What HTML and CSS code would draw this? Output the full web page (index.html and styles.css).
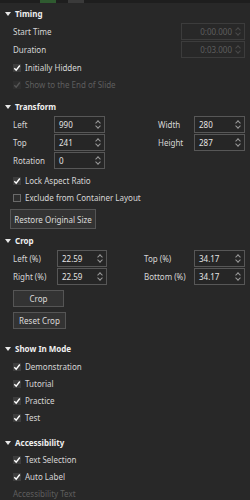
FILE: index.html
```
<!DOCTYPE html>
<html lang="en">
<head>
    <meta charset="UTF-8">
    <title>Properties</title>
    <link rel="stylesheet" href="styles.css">
</head>
<body>

<div class="tabstrip">
    <span class="tab tab-active"></span>
    <span class="tab"></span>
</div>

<div class="section sec-timing">
    <div class="head"><span class="tri"></span>Timing</div>
    <div class="trow">
        <span>Start Time</span>
        <div class="spin off"><span class="val">0:00.000</span><span class="arr"></span></div>
    </div>
    <div class="trow">
        <span>Duration</span>
        <div class="spin off"><span class="val">0:03.000</span><span class="arr"></span></div>
    </div>
    <div class="check on first">Initially Hidden</div>
    <div class="check on off">Show to the End of Slide</div>
</div>

<div class="section sec-transform">
    <div class="head"><span class="tri"></span>Transform</div>
    <div class="grid g-transform">
        <span>Left</span>
        <div class="spin"><span class="val">990</span><span class="arr"></span></div>
        <span></span>
        <span>Width</span>
        <div class="spin"><span class="val">280</span><span class="arr"></span></div>
        <span>Top</span>
        <div class="spin"><span class="val">241</span><span class="arr"></span></div>
        <span></span>
        <span>Height</span>
        <div class="spin"><span class="val">287</span><span class="arr"></span></div>
        <span>Rotation</span>
        <div class="spin"><span class="val">0</span><span class="arr"></span></div>
    </div>
    <div class="check on gap3">Lock Aspect Ratio</div>
    <div class="check">Exclude from Container Layout</div>
    <button class="btn btn-restore">Restore Original Size</button>
</div>

<div class="section sec-crop">
    <div class="head"><span class="tri"></span>Crop</div>
    <div class="grid g-crop">
        <span>Left (%)</span>
        <div class="spin"><span class="val">22.59</span><span class="arr"></span></div>
        <span></span>
        <span>Top (%)</span>
        <div class="spin"><span class="val">34.17</span><span class="arr"></span></div>
        <span>Right (%)</span>
        <div class="spin"><span class="val">22.59</span><span class="arr"></span></div>
        <span></span>
        <span>Bottom (%)</span>
        <div class="spin"><span class="val">34.17</span><span class="arr"></span></div>
    </div>
    <button class="btn btn-crop">Crop</button>
    <button class="btn btn-reset">Reset Crop</button>
</div>

<div class="section sec-mode">
    <div class="head"><span class="tri"></span>Show In Mode</div>
    <div class="check on first">Demonstration</div>
    <div class="check on">Tutorial</div>
    <div class="check on">Practice</div>
    <div class="check on">Test</div>
</div>

<div class="section sec-access">
    <div class="head"><span class="tri"></span>Accessibility</div>
    <div class="check on">Text Selection</div>
    <div class="check on">Auto Label</div>
    <div class="plain off">Accessibility Text</div>
</div>

</body>
</html>
```

FILE: styles.css
```
body {
    margin: 0;
    width: 250px;
    height: 500px;
    overflow: hidden;
    background: #282828;
    color: #d6d6d6;
    font-family: "Noto Sans", sans-serif;
    font-size: 8px;
}
.tabstrip {
    height: 3px;
    background: #1e1e1e;
    display: flex;
    padding-left: 40px;
    gap: 12px;
    margin-bottom: 2px;
}
.tab {
    width: 16px;
    background: #3a3a3a;
}
.tab-active {
    background: #2f5a30;
}
.head {
    height: 17px;
    display: flex;
    align-items: center;
    font-weight: bold;
    color: #f0f0f0;
    padding-left: 5px;
}
.tri {
    width: 0;
    height: 0;
    border-left: 3px solid transparent;
    border-right: 3px solid transparent;
    border-top: 4px solid #e8e8e8;
    margin-right: 4px;
}
.trow {
    height: 18px;
    display: flex;
    align-items: center;
    justify-content: space-between;
    padding: 0 5px 0 13px;
}
.trow .spin {
    width: 64px;
}
.trow .val {
    flex: 1;
    text-align: right;
    margin-right: 3px;
}
.spin {
    box-sizing: border-box;
    height: 17px;
    border: 1px solid #575757;
    background: #262626;
    display: flex;
    align-items: center;
    padding-left: 4px;
    color: #e4e4e4;
}
.spin .val {
    flex: 1;
}
.arr {
    width: 5px;
    height: 9px;
    margin-right: 4px;
    position: relative;
}
.arr::before, .arr::after {
    content: "";
    position: absolute;
    left: 1px;
    width: 3px;
    height: 3px;
    border-left: 1px solid #9a9a9a;
    border-top: 1px solid #9a9a9a;
}
.arr::before {
    top: 1px;
    transform: rotate(45deg);
}
.arr::after {
    bottom: 1px;
    transform: rotate(225deg);
}
.spin.off {
    border-color: #3c3c3c;
    background: #282828;
    color: #5e5e5e;
}
.spin.off .arr::before, .spin.off .arr::after {
    border-color: #4a4a4a;
}
.check {
    height: 17px;
    display: flex;
    align-items: center;
    padding-left: 13px;
}
.check::before {
    content: "";
    box-sizing: border-box;
    width: 8px;
    height: 8px;
    border: 1px solid #6a6a6a;
    background: #2e2e2e;
    margin-right: 4px;
}
.check.on::before {
    border: none;
    background: #3d3d3d url("data:image/svg+xml;utf8,<svg xmlns='http://www.w3.org/2000/svg' width='8' height='8'><path d='M1.3 4.2 L3.2 6.2 L6.8 1.5' fill='none' stroke='%23ffffff' stroke-width='1.4'/></svg>");
}
.off {
    color: #5e5e5e;
}
.check.on.off::before {
    background: #2e2e2e url("data:image/svg+xml;utf8,<svg xmlns='http://www.w3.org/2000/svg' width='8' height='8'><path d='M1.3 4.2 L3.2 6.2 L6.8 1.5' fill='none' stroke='%23555555' stroke-width='1.4'/></svg>");
}
.plain {
    height: 17px;
    display: flex;
    align-items: center;
    padding-left: 13px;
}
.grid {
    display: grid;
    grid-auto-rows: 18px;
    align-items: center;
    padding-left: 13px;
}
.g-transform {
    grid-template-columns: 41px 51px 53px 36px 51px;
}
.g-crop {
    grid-template-columns: 44px 50px 37px 50px 51px;
}
.btn {
    display: block;
    box-sizing: border-box;
    font-family: inherit;
    font-size: 8px;
    color: #dcdcdc;
    background: #333333;
    border: 1px solid #555555;
    padding: 0;
}
.check.first {
    margin-top: 1px;
}
.check.gap3 {
    margin-top: 3px;
}
.btn-restore {
    margin: 3px 0 0 10px;
    width: 86px;
    height: 20px;
}
.btn-crop {
    margin: 5px 0 0 13px;
    width: 51px;
    height: 17px;
}
.btn-reset {
    margin: 5px 0 0 13px;
    width: 53px;
    height: 17px;
}
.sec-timing {
    margin-bottom: 5px;
}
.sec-transform {
    margin-bottom: 3px;
}
.sec-crop {
    margin-bottom: 11px;
}
.sec-mode {
    margin-bottom: 8px;
}
```
